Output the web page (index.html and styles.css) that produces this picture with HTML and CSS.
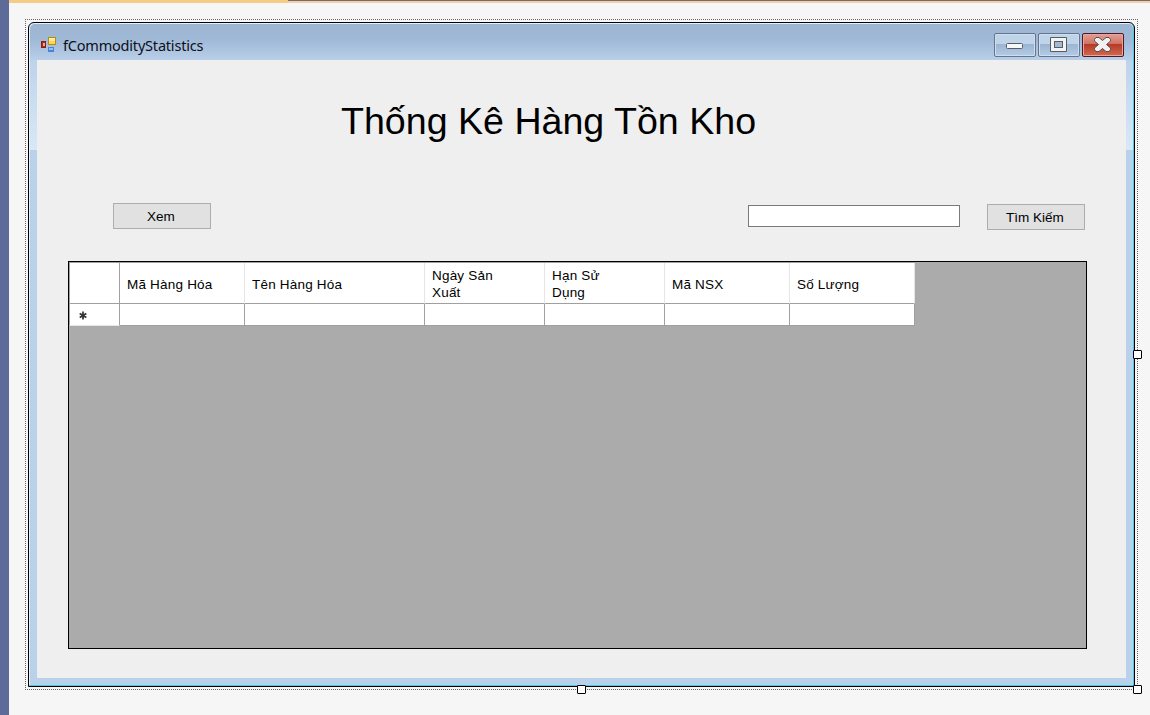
FILE: index.html
```html
<!DOCTYPE html>
<html lang="vi">
<head>
<meta charset="utf-8">
<title>fCommodityStatistics</title>
<link rel="stylesheet" href="styles.css">
</head>
<body>
<div class="dock"></div>
<main class="designer">
  <div class="tabline"><div class="tabline-active"></div><div class="tabline-rest"></div></div>
  <div class="selection">
    <section class="window">
      <header class="titlebar">
        <svg class="app-icon" width="18" height="18" viewBox="0 0 18 18">
          <rect x="1.500" y="5.500" width="4" height="6" fill="#b52a1b" stroke="#8b1d14"/>
          <rect x="3" y="7" width="2" height="3" fill="#f0a193"/>
          <rect x="8.500" y="1.500" width="7" height="7" fill="#fbd84f" stroke="#b98a12"/>
          <path d="M9 2h6v3h-6z" fill="#fff0a0"/>
          <rect x="8" y="11" width="6" height="5" fill="#4c82d6"/>
          <rect x="9" y="12" width="4" height="2" fill="#8fc0fb"/>
        </svg>
        <span class="caption">fCommodityStatistics</span>
        <div class="controls">
          <div class="ctl"><svg width="42" height="24" viewBox="0 0 42 24"><rect x="12.500" y="10.500" width="16" height="5" rx="1" fill="#f7f7f7" stroke="#565c66"/></svg></div>
          <div class="ctl"><svg width="42" height="24" viewBox="0 0 42 24"><path d="M12.500 4.500h16v14h-16z" fill="#f4f4f4" stroke="#565c66"/><rect x="16.500" y="8.500" width="8" height="6" fill="#a3bad3" stroke="#565c66"/></svg></div>
          <div class="ctl ctl-close"><svg width="42" height="24" viewBox="0 0 42 24"><path d="M14 4.500h3l3.500 3 3.500-3h3l1.500 2v1.500l-4 3.500 4 3.500v1.500l-1.500 2h-3l-3.500-3-3.500 3h-3l-1.500-2v-1.500l4-3.500-4-3.500v-1.500z" fill="#f1f1f1" stroke="#5d4d55" stroke-linejoin="round"/></svg></div>
        </div>
      </header>
      <div class="client">
        <h1 class="title"><span>Thống Kê Hàng Tồn Kho</span></h1>
        <div class="toolbar">
          <button class="btn view">Xem</button>
          <input class="search" type="text">
          <button class="btn find">Tìm Kiếm</button>
        </div>
        <div class="grid">
          <div class="row head">
            <div class="cell"></div><div class="cell">Mã Hàng Hóa</div><div class="cell">Tên Hàng Hóa</div><div class="cell">Ngày Sản<br>Xuất</div><div class="cell">Hạn Sử<br>Dụng</div><div class="cell">Mã NSX</div><div class="cell">Số Lượng</div>
          </div>
          <div class="row entry">
            <div class="cell"><svg width="8" height="9" viewBox="0 0 8 9"><path d="M4 .5v8M.7 2.500l6.600 4M7.300 2.500l-6.600 4" stroke="#333" stroke-width="1.700"/></svg></div><div class="cell"></div><div class="cell"></div><div class="cell"></div><div class="cell"></div><div class="cell"></div><div class="cell"></div>
          </div>
        </div>
      </div>
    </section>
    <i class="dots top"></i><i class="dots bottom"></i><i class="dots left"></i><i class="dots right"></i>
    <i class="handle east"></i><i class="handle south"></i><i class="handle corner"></i>
  </div>
</main>
</body>
</html>
```
FILE: styles.css
```css
* { box-sizing: border-box; }
body { margin: 0; width: 1150px; height: 715px; display: flex; overflow: hidden; background: #f6f6f6; font-family: "Liberation Sans", Arial, sans-serif; font-size: 14px; color: #000; }
.dock { width: 9px; background: #5d6b99; }
.designer { flex: 1; min-width: 0; }
.tabline { height: 3px; display: flex; }
.tabline-active { width: 279px; background: #f5cc84; }
.tabline-rest { flex: 1; background: #efd1aa; border-top: 1px solid #79696a; }

.selection { position: relative; width: 1113px; height: 671px; margin: 16px 0 0 16px; padding: 3px; }
.dots { position: absolute; }
.dots.top, .dots.bottom { left: 0; right: 0; height: 1px; background: repeating-linear-gradient(90deg, #705f69 0 1px, transparent 1px 2px); }
.dots.left, .dots.right { top: 0; bottom: 0; width: 1px; background: repeating-linear-gradient(#705f69 0 1px, transparent 1px 2px); }
.top { top: 0; }
.bottom { bottom: 0; }
.left { left: 0; }
.right { right: 0; }
.handle { position: absolute; width: 9px; height: 9px; background: #fff; border: 1px solid #000; border-radius: 1px; }
.east { right: -4px; top: 331px; }
.south { left: 552px; bottom: -4px; }
.corner { right: -4px; bottom: -4px; }

.window { width: 1107px; height: 665px; border: 1px solid #000; border-radius: 6px 6px 0 0; display: flex; flex-direction: column; padding: 0 8px 8px;
  background: linear-gradient(#b9d1ea 0 37px, #bdd3ec 37px, #d9e8f7 127px, #b9d1ea 127px); box-shadow: inset -1px -1px 0 #4bcbe6, inset 1px 1px 0 #e5effa; }
.titlebar { height: 36px; margin: 1px -7px 0; padding: 0 8px 0 9px; display: flex; align-items: flex-start; border-radius: 5px 5px 0 0; background: linear-gradient(#9bb5d2, #a0b9d7 45%, #b9cfe9); }
.app-icon { margin: 12px 5px 0 1px; }
.caption { flex: 1; margin-top: 12px; font: 14.5px/19px "Noto Sans", "Open Sans", sans-serif; letter-spacing: -.2px; color: #0b1018; }
.controls { display: flex; gap: 2px; margin: 9px 1px 0 0; }
.ctl { width: 42px; height: 24px; border: 1px solid #64758d; border-radius: 2px; background: linear-gradient(#bfd3e9 0 10px, #9bb4d1 10px, #b3cbe6); box-shadow: inset 0 0 0 1px #cfdeee; }
.ctl svg { display: block; margin: -1px; }
.ctl-close { border-color: #501724; background: linear-gradient(#e2a094, #cf7263 10px, #b63824 10px, #d16a50); box-shadow: inset 0 0 0 1px #e7a69b; }

.client { flex: 1; background: #efefef; width: 1089px; }
.title { margin: 0; height: 143px; padding: 39px 0 0 304px; font-weight: 400; font-size: 37.6px; line-height: 44px; white-space: nowrap; }
.toolbar { height: 58px; display: flex; align-items: flex-start; padding-left: 76px; }
.btn { width: 98px; height: 26px; padding: 0 2px 0 0; border: 1px solid #adadad; background: #e1e1e1; font: 13.5px "Liberation Sans", Arial, sans-serif; color: #000; }
.search { width: 212px; height: 22px; margin: 2px 27px 0 537px; padding: 2px; border: 1px solid #7a7a7a; background: #fff; }
.find { margin-top: 1px; }

.grid { width: 1019px; height: 388px; margin-left: 31px; border: 1px solid #000; background: #ababab; }
.row { display: grid; grid-template-columns: 51px 125px 180px 120px 120px 125px 125px; width: 846px; }
.head { height: 42px; border-top: 1px solid #a0a0a0; font-size: 13.5px; letter-spacing: .2px; line-height: 17px; }
.entry { height: 22px; }
.cell { background: #fff; border-right: 1px solid #a0a0a0; border-bottom: 1px solid #a0a0a0; padding-left: 7px; display: flex; align-items: center; }
.cell:first-child { border-left: 1px solid #a0a0a0; padding-left: 9px; }
.head .cell { padding-top: 2px; }
.head .cell:not(:first-child) { border-right-color: #e5e5e5; }
.entry .cell:first-child { border-bottom-color: #e5e5e5; padding-top: 2px; }
```
